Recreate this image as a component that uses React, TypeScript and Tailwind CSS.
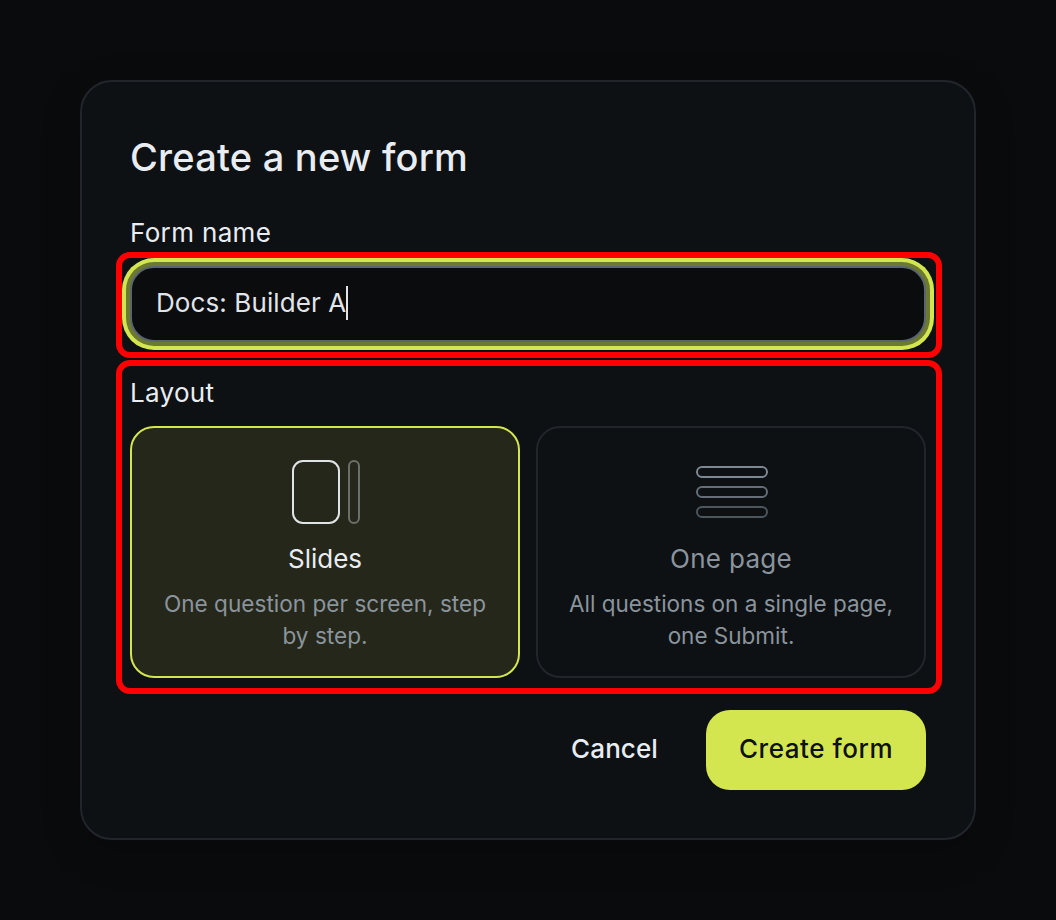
const font = 'font-["Inter","Liberation_Sans",sans-serif]';

function SlidesIcon() {
  return (
    <svg width="68" height="64" viewBox="0 0 68 64" fill="none">
      <rect x="1" y="1" width="46" height="62" rx="10" stroke="#dfe4e6" strokeWidth="2" />
      <rect x="57" y="1" width="10" height="62" rx="5" stroke="#6b6f68" strokeWidth="2" />
    </svg>
  );
}

function OnePageIcon() {
  return (
    <svg width="72" height="52" viewBox="0 0 72 52" fill="none">
      <rect x="1" y="1" width="70" height="10" rx="5" stroke="#7e8893" strokeWidth="2" />
      <rect x="1" y="21" width="70" height="10" rx="5" stroke="#656e78" strokeWidth="2" />
      <rect x="1" y="41" width="70" height="10" rx="5" stroke="#4d555d" strokeWidth="2" />
    </svg>
  );
}

export default function App() {
  return (
    <div className={`${font} w-[1056px] h-[920px] bg-[#0a0b0d] flex items-start justify-center pt-[80px]`}>
      <div className="w-[896px] h-[760px] rounded-[32px] border-2 border-[#22262b] bg-[#0d1114] px-[48px] pt-[51px] shadow-[0_12px_40px_rgba(0,0,0,0.2)]">
        <h1 className="text-[38px] leading-[48px] font-medium text-[#e9edf1] tracking-[0.22px]">Create a new form</h1>

        <label className="block mt-[34px] text-[26px] leading-[36px] tracking-[0.35px] text-[#e9edf1]">Form name</label>
        <div className="relative mt-[15px]">
          <div className="h-[76px] rounded-[24px] border-2 border-[#5a6470] bg-[#0a0c0e] flex items-center px-[24px] pb-[3px] shadow-[0_0_0_4px_#6b7a30,0_0_0_8px_#d4e64f]">
            <span className="text-[26px] tracking-[0.1px] text-[#e1e5ea]">Docs: Builder A</span>
            <span className="w-[2px] h-[34px] bg-[#e1e5ea]" />
          </div>
          <div className="absolute -left-[14px] -right-[16px] -top-[14px] -bottom-[16px] rounded-[14px] border-[6px] border-[#ff0000]" />
        </div>

        <div className="relative mt-[33px]">
          <label className="block text-[26px] leading-[36px] tracking-[0.3px] text-[#e9edf1]">Layout</label>
          <div className="mt-[15px] grid grid-cols-2 gap-[16px]">
            <div className="h-[252px] rounded-[24px] border-2 border-[#d4e64f] bg-[#25271a] flex flex-col items-center pt-[32px]">
              <div className="h-[64px] flex items-center ml-[2px]"><SlidesIcon /></div>
              <div className="mt-[17px] text-[26px] leading-[36px] text-[#e9edf1]">Slides</div>
              <div className="mt-[11px] w-[340px] text-center text-[22.6px] leading-[32px] text-[#8b949c]">One question per screen, step by step.</div>
            </div>
            <div className="h-[252px] rounded-[24px] border-2 border-[#22262b] flex flex-col items-center pt-[32px]">
              <div className="h-[64px] flex items-center ml-[2px]"><OnePageIcon /></div>
              <div className="mt-[17px] text-[26px] leading-[36px] tracking-[0.3px] text-[#8b949c]">One page</div>
              <div className="mt-[11px] w-[340px] text-center text-[22.5px] leading-[32px] text-[#8b949c]">All questions on a single page, one Submit.</div>
            </div>
          </div>
          <div className="absolute -left-[14px] -right-[16px] -top-[15px] -bottom-[16px] rounded-[14px] border-[6px] border-[#ff0000]" />
        </div>

        <div className="mt-[32px] flex items-center justify-end gap-[48px]">
          <button className="pb-[3px] text-[26px] font-medium tracking-[0.1px] text-[#e9edf1]">Cancel</button>
          <button className="w-[220px] h-[80px] pb-[3px] rounded-[24px] bg-[#d4e64f] text-[26px] font-medium tracking-[0.55px] text-[#0d1114]">Create form</button>
        </div>
      </div>
    </div>
  );
}
